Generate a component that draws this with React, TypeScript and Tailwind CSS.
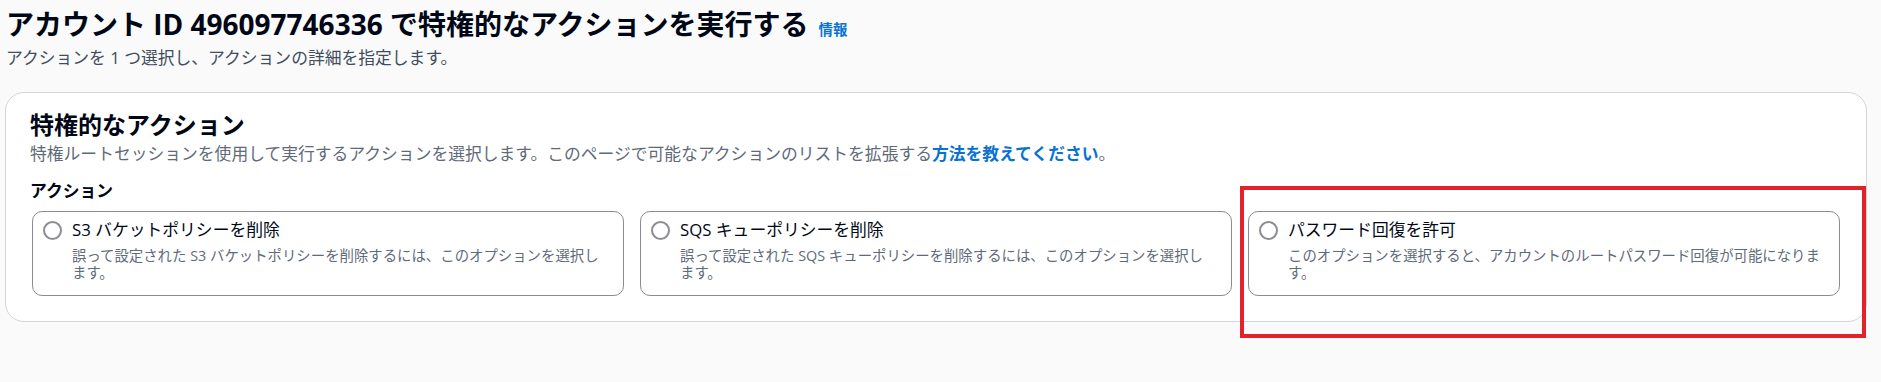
import React from 'react';

type Tile = {
    title: string;
    lines: string[];
};

const TILES: Tile[] = [
    {
        title: 'S3 バケットポリシーを削除',
        lines: ['誤って設定された S3 バケットポリシーを削除するには、このオプションを選択し', 'ます。'],
    },
    {
        title: 'SQS キューポリシーを削除',
        lines: ['誤って設定された SQS キューポリシーを削除するには、このオプションを選択し', 'ます。'],
    },
    {
        title: 'パスワード回復を許可',
        lines: ['このオプションを選択すると、アカウントのルートパスワード回復が可能になりま', 'す。'],
    },
];

const ActionTile: React.FC<{ tile: Tile }> = ({ tile }) => (
    <label className="flex items-start gap-[10px] rounded-[10px] border border-[#8c8c94] bg-white pl-[10px] pr-[14px] pt-[8px] pb-[14px] cursor-pointer">
        <span className="mt-[1px] h-[19px] w-[19px] shrink-0 rounded-full border-2 border-[#8c8c94] bg-white" />
        <span className="flex flex-col">
            <span className="text-[16.8px] leading-[20px] text-[#000716]">{tile.title}</span>
            <span className="mt-[7px] text-[14.4px] leading-[17px] text-[#5f6b7a] whitespace-nowrap">
                {tile.lines[0]}
                <br />
                {tile.lines[1]}
            </span>
        </span>
    </label>
);

const App: React.FC = () => {
    return (
        <div
            className="relative min-h-screen w-full bg-[#fafafa] pl-[5px] pr-[14px] pt-[6px]"
            style={{ fontFamily: '"Open Sans", "Noto Sans CJK JP", sans-serif' }}
        >
            {/* page header */}
            <div className="flex items-baseline gap-[10px] pl-px">
                <h1 className="text-[28px] leading-[36px] font-bold text-[#000716]">
                    アカウント ID 496097746336 で特権的なアクションを実行する
                </h1>
                <a href="#" className="text-[14.4px] font-bold text-[#0972d3]">情報</a>
            </div>
            <p className="mt-[6px] pl-px text-[16.8px] leading-[20px] text-[#414d5c]">
                アクションを 1 つ選択し、アクションの詳細を指定します。
            </p>

            {/* container */}
            <div className="mt-[24px] rounded-[19px] border border-[#d1d5db] bg-white px-[24px] pt-[17px] pb-[25px]">
                <h2 className="text-[24px] leading-[29px] font-bold text-[#000716]">特権的なアクション</h2>
                <p className="mt-[5px] text-[16.8px] leading-[20px] text-[#5f6b7a]">
                    特権ルートセッションを使用して実行するアクションを選択します。このページで可能なアクションのリストを拡張する
                    <a href="#" className="font-bold text-[#0972d3]">方法を教えてください</a>。
                </p>

                <div className="mt-[17px] text-[16.8px] leading-[20px] font-bold text-[#000716]">アクション</div>
                <div className="mt-[10px] grid grid-cols-3 gap-[16px] pl-[2px] pr-[2px]">
                    {TILES.map(tile => (
                        <ActionTile key={tile.title} tile={tile} />
                    ))}
                </div>
            </div>

            {/* annotation highlight */}
            <div className="pointer-events-none absolute left-[1240px] top-[186px] h-[152px] w-[626px] border-[4px] border-[#e3222b]" />
        </div>
    );
};

export default App;
